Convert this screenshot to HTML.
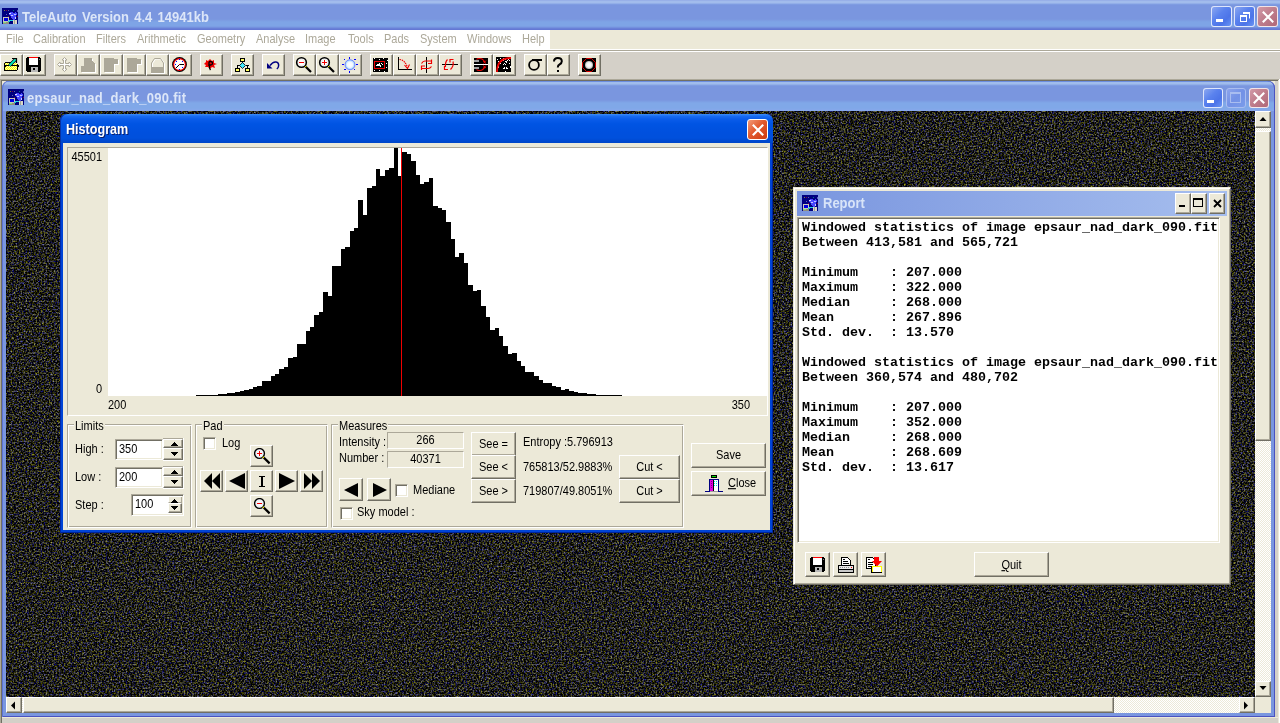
<!DOCTYPE html><html><head><meta charset="utf-8"><style>
*{box-sizing:border-box}
html,body{margin:0;padding:0}
body{width:1280px;height:723px;overflow:hidden;position:relative;background:#D4D0C8;font-family:"Liberation Sans",sans-serif;font-size:11px;color:#000}
.a{position:absolute}
.t{position:absolute;white-space:nowrap;line-height:13px;will-change:transform;transform:scaleY(1.12);transform-origin:0 10px}
.tbi{background:linear-gradient(to bottom,#98B0E8 0,#98B0E8 1px,#A2BCEC 1px,#A2BCEC 3px,#84A2E4 4px,#7A96DF 5px,#7A96DF 19px,#7EA4E6 22px,#7EA4E6 26px,#7898E2 27px,#6E88DA 28px,#6478D4 29px,#6478D4 30px)}
.tbc{background:linear-gradient(to bottom,#6C8EE0 0,#6C8EE0 1px,#A0BCEC 1px,#A0BCEC 3px,#86A4E4 4px,#7A96DF 5px,#7A96DF 19px,#80A8E8 22px,#80A8E8 27px,#88A8EC 30px)}
.rb{position:absolute;background:#ECE9D8;border-top:1px solid #fff;border-left:1px solid #fff;border-right:1px solid #716F64;border-bottom:1px solid #716F64;box-shadow:inset -1px -1px 0 #ACA899}
.sk{position:absolute;border-top:1px solid #ACA899;border-left:1px solid #ACA899;border-right:1px solid #fff;border-bottom:1px solid #fff}
.sk2{position:absolute;background:#fff;border-top:1px solid #ACA899;border-left:1px solid #ACA899;border-right:1px solid #fff;border-bottom:1px solid #fff;box-shadow:inset 1px 1px 0 #716F64, inset -1px -1px 0 #ECE9D8}
.gb{position:absolute;border-top:1px solid #ACA899;border-left:1px solid #ACA899;border-right:1px solid #fff;border-bottom:1px solid #fff;box-shadow:inset 1px 1px 0 #fff, inset -1px -1px 0 #ACA899}
.menu .t{top:3px;color:#ACA899;font-size:11px}
.tb{top:54px;width:23px;height:22px}
.tb svg{position:absolute;left:2px;top:2px}
.mono{font-family:"Liberation Mono",monospace;font-weight:bold;font-size:13.33px;line-height:15px;white-space:pre;position:absolute;will-change:transform}
.xpb{position:absolute;border-radius:3px;border:1px solid #fff}
</style></head><body>
<div class="a tbi" style="left:0;top:0;width:1280px;height:30px"></div>
<svg class="a" style="left:2px;top:8px" width="16" height="16" viewBox="0 0 16 16" shape-rendering="crispEdges"><rect width="16" height="16" fill="#000080"/><rect x="2" y="2" width="1" height="1" fill="#808040"/><rect x="4" y="2" width="1" height="1" fill="#800040"/><rect x="6" y="2" width="1" height="1" fill="#6060A0"/><rect x="11" y="2" width="1" height="1" fill="#008080"/><rect x="15" y="2" width="1" height="2" fill="#6060C0"/><rect x="4" y="6" width="1" height="1" fill="#6060C0"/><rect x="6" y="8" width="1" height="1" fill="#800040"/><rect x="15" y="8" width="1" height="1" fill="#800040"/><path d="M7 5 L9 4 L12 5 L14 4 L15 6 L14 8 L13 11 L12 12 L10 11 L9 9 L8 8 Z" fill="#4848FF"/><rect x="7" y="5" width="2" height="1" fill="#E0E0FF"/><rect x="9" y="7" width="2" height="1" fill="#C8C8FF"/><rect x="12" y="6" width="2" height="1" fill="#C0C0FF"/><rect x="13" y="9" width="1" height="2" fill="#D0D0FF"/><rect x="1" y="9" width="6" height="5" fill="#C8C8B8"/><rect x="2" y="10" width="4" height="3" fill="#0000E0"/><rect x="1" y="14" width="6" height="2" fill="#909080"/><rect x="1" y="14" width="3" height="1" fill="#80E080"/><rect x="7" y="12" width="4" height="1" fill="#20D8E8"/><rect x="6" y="13" width="2" height="1" fill="#20B8C8"/><rect x="11" y="12" width="4" height="4" fill="#D8D8C8"/><rect x="12" y="12" width="1" height="4" fill="#A0A098"/></svg>
<div class="t" style="left:22px;top:11px;font-weight:bold;font-size:13px;word-spacing:1.7px;color:#DCE6F8">TeleAuto Version 4.4 14941kb</div>
<div class="xpb" style="left:1211px;top:6px;width:21px;height:21px;background:linear-gradient(135deg,#8BA7F0 0%,#5A82EE 40%,#4C74E8 70%,#6A95F4 100%);border-color:rgba(255,255,255,0.8)">
<div class="a" style="left:4px;top:12px;width:7px;height:3px;background:#fff"></div>
</div>
<div class="xpb" style="left:1234px;top:6px;width:21px;height:21px;background:linear-gradient(135deg,#8BA7F0 0%,#5A82EE 40%,#4C74E8 70%,#6A95F4 100%);border-color:rgba(255,255,255,0.8)">
<svg class="a" style="left:4px;top:4px" width="12" height="12"><path d="M4 1.5 H10.5 V7.5 M4 2.5 H10.5" stroke="#fff" stroke-width="1" fill="none"/><rect x="1.5" y="4.5" width="6" height="6" stroke="#fff" fill="none"/><rect x="1" y="4" width="7" height="2" fill="#fff"/><rect x="4" y="1" width="7" height="2" fill="#fff"/></svg>
</div>
<div class="xpb" style="left:1257px;top:6px;width:21px;height:21px;background:linear-gradient(135deg,#D29AA8 0%,#C07F8E 45%,#B06878 100%);border-color:rgba(255,255,255,0.8)">
<svg class="a" style="left:3px;top:3px" width="14" height="14"><path d="M1.8 1.8 L12.2 12.2 M12.2 1.8 L1.8 12.2" stroke="#fff" stroke-width="2.1"/></svg>
</div>
<div class="a" style="left:0;top:30px;width:1280px;height:19px;background:#ECE9D8"></div>
<div class="a menu" style="left:0;top:30px;width:550px;height:19px;background:#fff">
<div class="t" style="left:6px">File</div>
<div class="t" style="left:33px">Calibration</div>
<div class="t" style="left:96px">Filters</div>
<div class="t" style="left:137px">Arithmetic</div>
<div class="t" style="left:197px">Geometry</div>
<div class="t" style="left:256px">Analyse</div>
<div class="t" style="left:305px">Image</div>
<div class="t" style="left:348px">Tools</div>
<div class="t" style="left:384px">Pads</div>
<div class="t" style="left:420px">System</div>
<div class="t" style="left:467px">Windows</div>
<div class="t" style="left:522px">Help</div>
</div>
<div class="a" style="left:0;top:49px;width:1280px;height:1px;background:#fff"></div>
<div class="a" style="left:0;top:50px;width:1280px;height:1px;background:#ACA899"></div>
<div class="a" style="left:0;top:51px;width:1280px;height:1px;background:#fff"></div>
<div class="a" style="left:0;top:52px;width:1280px;height:28px;background:#D4D0C8"></div>
<div class="rb tb" style="left:0px"></div>
<div class="rb tb" style="left:23px"></div>
<div class="rb tb" style="left:54px"></div>
<div class="rb tb" style="left:77px"></div>
<div class="rb tb" style="left:100px"></div>
<div class="rb tb" style="left:123px"></div>
<div class="rb tb" style="left:146px"></div>
<div class="rb tb" style="left:169px"></div>
<div class="rb tb" style="left:200px"></div>
<div class="rb tb" style="left:231px"></div>
<div class="rb tb" style="left:262px"></div>
<div class="rb tb" style="left:293px"></div>
<div class="rb tb" style="left:316px"></div>
<div class="rb tb" style="left:339px"></div>
<div class="rb tb" style="left:370px"></div>
<div class="rb tb" style="left:393px"></div>
<div class="rb tb" style="left:416px"></div>
<div class="rb tb" style="left:439px"></div>
<div class="rb tb" style="left:470px"></div>
<div class="rb tb" style="left:493px"></div>
<div class="rb tb" style="left:524px"></div>
<div class="rb tb" style="left:547px"></div>
<div class="rb tb" style="left:578px"></div>
<svg class="a" style="left:0;top:0" width="620" height="80"><g shape-rendering="crispEdges"><rect x="5" y="62" width="6" height="1" fill="#000"/><rect x="4" y="63" width="1" height="8" fill="#000"/><rect x="5" y="70" width="12" height="1" fill="#000"/><rect x="11" y="63" width="6" height="1" fill="#000"/><rect x="5" y="63" width="1" height="1" fill="#FFFF00"/><rect x="6" y="63" width="1" height="1" fill="#FFFFB0"/><rect x="7" y="63" width="1" height="1" fill="#FFFF00"/><rect x="8" y="63" width="1" height="1" fill="#FFFFB0"/><rect x="9" y="63" width="1" height="1" fill="#FFFF00"/><rect x="10" y="63" width="1" height="1" fill="#FFFFB0"/><rect x="11" y="63" width="1" height="1" fill="#FFFF00"/><rect x="12" y="63" width="1" height="1" fill="#FFFFB0"/><rect x="13" y="63" width="1" height="1" fill="#FFFF00"/><rect x="14" y="63" width="1" height="1" fill="#FFFFB0"/><rect x="15" y="63" width="1" height="1" fill="#FFFF00"/><rect x="16" y="63" width="1" height="1" fill="#FFFFB0"/><rect x="5" y="64" width="1" height="1" fill="#FFFFB0"/><rect x="6" y="64" width="1" height="1" fill="#FFFF00"/><rect x="7" y="64" width="1" height="1" fill="#FFFFB0"/><rect x="8" y="64" width="1" height="1" fill="#FFFF00"/><rect x="9" y="64" width="1" height="1" fill="#FFFFB0"/><rect x="10" y="64" width="1" height="1" fill="#FFFF00"/><rect x="11" y="64" width="1" height="1" fill="#FFFFB0"/><rect x="12" y="64" width="1" height="1" fill="#FFFF00"/><rect x="13" y="64" width="1" height="1" fill="#FFFFB0"/><rect x="14" y="64" width="1" height="1" fill="#FFFF00"/><rect x="15" y="64" width="1" height="1" fill="#FFFFB0"/><rect x="16" y="64" width="1" height="1" fill="#FFFF00"/><rect x="5" y="65" width="1" height="1" fill="#FFFF00"/><rect x="6" y="65" width="1" height="1" fill="#FFFFB0"/><rect x="7" y="65" width="1" height="1" fill="#FFFF00"/><rect x="8" y="65" width="1" height="1" fill="#FFFFB0"/><rect x="9" y="65" width="1" height="1" fill="#FFFF00"/><rect x="10" y="65" width="1" height="1" fill="#FFFFB0"/><rect x="11" y="65" width="1" height="1" fill="#FFFF00"/><rect x="12" y="65" width="1" height="1" fill="#FFFFB0"/><rect x="13" y="65" width="1" height="1" fill="#FFFF00"/><rect x="14" y="65" width="1" height="1" fill="#FFFFB0"/><rect x="15" y="65" width="1" height="1" fill="#FFFF00"/><rect x="16" y="65" width="1" height="1" fill="#FFFFB0"/><rect x="5" y="66" width="1" height="1" fill="#FFFFB0"/><rect x="6" y="66" width="1" height="1" fill="#FFFF00"/><rect x="7" y="66" width="1" height="1" fill="#FFFFB0"/><rect x="8" y="66" width="1" height="1" fill="#FFFF00"/><rect x="9" y="66" width="1" height="1" fill="#FFFFB0"/><rect x="10" y="66" width="1" height="1" fill="#FFFF00"/><rect x="11" y="66" width="1" height="1" fill="#FFFFB0"/><rect x="12" y="66" width="1" height="1" fill="#FFFF00"/><rect x="13" y="66" width="1" height="1" fill="#FFFFB0"/><rect x="14" y="66" width="1" height="1" fill="#FFFF00"/><rect x="15" y="66" width="1" height="1" fill="#FFFFB0"/><rect x="16" y="66" width="1" height="1" fill="#FFFF00"/><rect x="5" y="67" width="1" height="1" fill="#FFFF00"/><rect x="6" y="67" width="1" height="1" fill="#FFFFB0"/><rect x="7" y="67" width="1" height="1" fill="#FFFF00"/><rect x="8" y="67" width="1" height="1" fill="#FFFFB0"/><rect x="9" y="67" width="1" height="1" fill="#FFFF00"/><rect x="10" y="67" width="1" height="1" fill="#FFFFB0"/><rect x="11" y="67" width="1" height="1" fill="#FFFF00"/><rect x="12" y="67" width="1" height="1" fill="#FFFFB0"/><rect x="13" y="67" width="1" height="1" fill="#FFFF00"/><rect x="14" y="67" width="1" height="1" fill="#FFFFB0"/><rect x="15" y="67" width="1" height="1" fill="#FFFF00"/><rect x="16" y="67" width="1" height="1" fill="#FFFFB0"/><rect x="5" y="68" width="1" height="1" fill="#FFFFB0"/><rect x="6" y="68" width="1" height="1" fill="#FFFF00"/><rect x="7" y="68" width="1" height="1" fill="#FFFFB0"/><rect x="8" y="68" width="1" height="1" fill="#FFFF00"/><rect x="9" y="68" width="1" height="1" fill="#FFFFB0"/><rect x="10" y="68" width="1" height="1" fill="#FFFF00"/><rect x="11" y="68" width="1" height="1" fill="#FFFFB0"/><rect x="12" y="68" width="1" height="1" fill="#FFFF00"/><rect x="13" y="68" width="1" height="1" fill="#FFFFB0"/><rect x="14" y="68" width="1" height="1" fill="#FFFF00"/><rect x="15" y="68" width="1" height="1" fill="#FFFFB0"/><rect x="16" y="68" width="1" height="1" fill="#FFFF00"/><rect x="5" y="69" width="1" height="1" fill="#FFFF00"/><rect x="6" y="69" width="1" height="1" fill="#FFFFB0"/><rect x="7" y="69" width="1" height="1" fill="#FFFF00"/><rect x="8" y="69" width="1" height="1" fill="#FFFFB0"/><rect x="9" y="69" width="1" height="1" fill="#FFFF00"/><rect x="10" y="69" width="1" height="1" fill="#FFFFB0"/><rect x="11" y="69" width="1" height="1" fill="#FFFF00"/><rect x="12" y="69" width="1" height="1" fill="#FFFFB0"/><rect x="13" y="69" width="1" height="1" fill="#FFFF00"/><rect x="14" y="69" width="1" height="1" fill="#FFFFB0"/><rect x="15" y="69" width="1" height="1" fill="#FFFF00"/><rect x="16" y="69" width="1" height="1" fill="#FFFFB0"/><rect x="17" y="64" width="1" height="6" fill="#000"/><rect x="18" y="65" width="1" height="2" fill="#000"/><rect x="5" y="65" width="12" height="1" fill="#000"/><rect x="5" y="66" width="1" height="1" fill="#000"/></g><path d="M9.5 65.5 L15.5 59.5" stroke="#000" stroke-width="3.2"/><path d="M9.5 65.5 L15.5 59.5" stroke="#00E8C0" stroke-width="2"/><path d="M12 58.5 H16.5 V63" stroke="#000" fill="none" stroke-width="1.2"/><g shape-rendering="crispEdges"><rect x="27" y="57" width="13" height="15" fill="#000"/><rect x="26" y="58" width="15" height="13" fill="#000"/><rect x="29" y="57" width="9" height="1" fill="#FF0000"/><rect x="29" y="58" width="9" height="7" fill="#fff"/><rect x="31" y="67" width="7" height="5" fill="#B8B8B8"/><rect x="33" y="68" width="2" height="2" fill="#000"/><rect x="39" y="59" width="1" height="1" fill="#808080"/></g><path d="M64.5 57.5 L67 60 H65.5 V63.5 H69 V62 L71.5 64.5 L69 67 V65.5 H65.5 V69 H67 L64.5 71.5 L62 69 H63.5 V65.5 H60 V67 L57.5 64.5 L60 62 V63.5 H63.5 V60 H62 Z" fill="#fff" stroke="#ACA899" stroke-width="1"/><path d="M64.5 59 V70 M59 64.5 H70" stroke="#fff" stroke-width="1"/><g shape-rendering="crispEdges"><path d="M84 58 H92 V60 L95 64 V72 H81 V66 H84 Z" fill="#fff" transform="translate(1,1)"/><path d="M84 58 H92 V60 L95 64 V72 H81 V66 H84 Z" fill="#ACA899"/><path d="M104 58 H114 V59 H118 V64 H114 V72 H104 Z" fill="#fff" transform="translate(1,1)"/><path d="M104 58 H114 V59 H118 V64 H114 V72 H104 Z" fill="#ACA899"/><path d="M127 58 H137 V59 H141 V64 H137 V72 H127 Z" fill="#fff" transform="translate(1,1)"/><path d="M127 58 H137 V59 H141 V64 H137 V72 H127 Z" fill="#ACA899"/></g><path d="M151.5 72 V63 L154.5 58.5 H160.5 L163.5 63 V72" fill="none" stroke="#fff" transform="translate(1,0.5)"/><path d="M151.5 67 V63 L154.5 58.5 H160.5 L163.5 63 V67" fill="none" stroke="#ACA899"/><g shape-rendering="crispEdges"><rect x="151" y="67" width="13" height="6" fill="#ACA899"/><rect x="164" y="67" width="1" height="6" fill="#fff"/><rect x="151" y="73" width="14" height="1" fill="#fff"/></g><circle cx="179.5" cy="64.5" r="7.4" fill="#000"/><circle cx="179.5" cy="64.5" r="6.5" fill="#F00000"/><circle cx="179.5" cy="64.5" r="5.3" fill="#fff"/><g shape-rendering="crispEdges" fill="#0000FF"><rect x="179" y="59" width="1" height="1"/><rect x="182" y="61" width="1" height="1"/><rect x="176" y="61" width="1" height="1"/><rect x="175" y="64" width="1" height="1"/><rect x="182" y="67" width="1" height="1"/><rect x="176" y="67" width="1" height="1"/><rect x="179" y="69" width="1" height="1"/></g><g shape-rendering="crispEdges"><rect x="180" y="64" width="4" height="1" fill="#000"/><rect x="179" y="64" width="1" height="1" fill="#F00000"/><rect x="178" y="65" width="1" height="1" fill="#000"/><rect x="177" y="66" width="1" height="1" fill="#000"/><rect x="176" y="67" width="1" height="1" fill="#000"/></g><path d="M210 59 L212 61 L214 60 L214 63 L217 64 L214 65 L215 68 L212 67 L210 69 L208 67 L205 67 L206 65 L204 64 L206 62 L206 60 L208 61 Z" fill="#F00000"/><path d="M209 66 V62.5 Q209 61.5 210.5 61.5 Q212.5 61.5 212.5 63.5 Q212.5 65 210.5 65 H209" fill="none" stroke="#000" stroke-width="1.3"/><path d="M209.5 66 Q209 68 210.5 70" fill="none" stroke="#000" stroke-width="1.3"/><g shape-rendering="crispEdges"><rect x="240" y="58" width="5" height="4" fill="#000"/><rect x="241" y="59" width="3" height="2" fill="#FFFF60"/><rect x="235" y="68" width="5" height="4" fill="#000"/><rect x="236" y="69" width="3" height="2" fill="#FFFF60"/><rect x="245" y="68" width="5" height="4" fill="#000"/><rect x="246" y="69" width="3" height="2" fill="#FFFF60"/><rect x="237" y="65" width="1" height="3" fill="#000"/><rect x="237" y="65" width="3" height="1" fill="#000"/><rect x="246" y="65" width="3" height="1" fill="#000"/><rect x="247" y="65" width="1" height="3" fill="#000"/><rect x="242" y="62" width="1" height="1" fill="#000"/></g><path d="M242.5 62.5 L245.5 65.5 L242.5 68.5 L239.5 65.5 Z" fill="#40E8FF" stroke="#000" stroke-width="0.8"/><path d="M270 65.5 Q273 61.5 276 62 Q279 62.5 278.6 66 Q278.3 68 276.8 69" fill="none" stroke="#000080" stroke-width="1.5"/><path d="M267 63 V68.5 H272.5 Z" fill="#000080"/><circle cx="301.5" cy="62.5" r="4.8" fill="#fff" stroke="#000" stroke-width="1.6"/><circle cx="301.5" cy="62.5" r="3.2" fill="none" stroke="#D8D8D8" stroke-width="0.5"/><g shape-rendering="crispEdges"><rect x="299.0" y="62" width="5" height="1.4" fill="#F00000"/></g><path d="M305.5 66.5 L311.0 72" stroke="#000" stroke-width="2.2"/><rect x="305.1" y="66" width="1.2" height="1.2" fill="#E8E800"/><circle cx="324.5" cy="62.5" r="4.8" fill="#fff" stroke="#000" stroke-width="1.6"/><circle cx="324.5" cy="62.5" r="3.2" fill="none" stroke="#D8D8D8" stroke-width="0.5"/><g shape-rendering="crispEdges"><rect x="322.0" y="62" width="5" height="1.4" fill="#F00000"/><rect x="323.8" y="59.5" width="1.4" height="5" fill="#F00000"/></g><path d="M328.5 66.5 L334.0 72" stroke="#000" stroke-width="2.2"/><rect x="328.1" y="66" width="1.2" height="1.2" fill="#E8E800"/><defs><radialGradient id="sg"><stop offset="0" stop-color="#fff"/><stop offset="0.55" stop-color="#F0F8FF"/><stop offset="0.85" stop-color="#A8D8FF"/><stop offset="1" stop-color="#7090FF"/></radialGradient></defs><circle cx="350" cy="64.7" r="5" fill="url(#sg)" stroke="#6A7CFF" stroke-width="0.8"/><g shape-rendering="crispEdges" fill="#0000FF"><rect x="349" y="57" width="1" height="2" fill="#0000FF"/><rect x="349" y="71" width="1" height="2" fill="#0000FF"/><rect x="342" y="64" width="2" height="1" fill="#0000FF"/><rect x="356" y="64" width="2" height="1" fill="#0000FF"/><rect x="344" y="59" width="1" height="1" fill="#0000FF"/><rect x="354" y="59" width="2" height="1" fill="#0000FF"/><rect x="344" y="69" width="2" height="1" fill="#0000FF"/><rect x="354" y="69" width="1" height="1" fill="#0000FF"/></g><g shape-rendering="crispEdges"><rect x="373" y="58" width="15" height="14" fill="#000"/><rect x="374" y="58" width="1" height="1" fill="#fff"/><rect x="379" y="59" width="1" height="1" fill="#fff"/><rect x="383" y="58" width="1" height="1" fill="#fff"/><rect x="387" y="60" width="1" height="1" fill="#fff"/><rect x="386" y="63" width="1" height="1" fill="#fff"/><rect x="386" y="67" width="1" height="1" fill="#fff"/><rect x="374" y="70" width="1" height="1" fill="#fff"/><rect x="379" y="70" width="1" height="1" fill="#fff"/><rect x="384" y="71" width="1" height="1" fill="#fff"/><rect x="374" y="62" width="1" height="1" fill="#fff"/><rect x="376" y="65" width="1" height="1" fill="#fff"/><rect x="374" y="61" width="11" height="1" fill="#F00000"/><rect x="374" y="68" width="11" height="1" fill="#F00000"/><rect x="374" y="61" width="1" height="8" fill="#F00000"/><rect x="384" y="61" width="1" height="8" fill="#F00000"/><rect x="377" y="64" width="2" height="2" fill="#fff"/><rect x="379" y="63" width="1" height="3" fill="#fff"/><rect x="380" y="65" width="1" height="2" fill="#fff"/><rect x="381" y="63" width="1" height="1" fill="#fff"/><rect x="382" y="64" width="1" height="1" fill="#fff"/></g><g shape-rendering="crispEdges"><rect x="398" y="57" width="1" height="13" fill="#000"/><rect x="398" y="69" width="14" height="1" fill="#000"/></g><path d="M399.5 59.5 Q405 60 407.5 67.5" fill="none" stroke="#F00000" stroke-width="1.1" stroke-dasharray="1.5 0.8"/><path d="M404.5 65 L407.5 68.5 L409.5 64.5" fill="none" stroke="#F00000" stroke-width="1.1"/><g shape-rendering="crispEdges"><rect x="426" y="57" width="1" height="16" fill="#000"/></g><path d="M421.5 63.5 Q423 61 425 61 H431" fill="none" stroke="#F00000" stroke-width="1.2"/><path d="M431.5 59.5 V63.5 H428" fill="none" stroke="#F00000" stroke-width="1.2"/><path d="M431.5 66.5 Q430 68.5 428 68.5 H422" fill="none" stroke="#F00000" stroke-width="1.2"/><path d="M421.5 70 V66 H425" fill="none" stroke="#F00000" stroke-width="1.2"/><g shape-rendering="crispEdges"><rect x="442" y="64" width="16" height="1" fill="#000"/></g><path d="M447.5 59.5 Q445 62 445.5 67 " fill="none" stroke="#F00000" stroke-width="1.2"/><path d="M444.5 66 V69.5 H448" fill="none" stroke="#F00000" stroke-width="1.2"/><path d="M453 61.5 Q454 66 450.5 69.5" fill="none" stroke="#F00000" stroke-width="1.2"/><path d="M450 62.5 V59.5 H453.5" fill="none" stroke="#F00000" stroke-width="1.2"/><g shape-rendering="crispEdges"><rect x="474" y="58" width="14" height="14" fill="#000"/><rect x="474" y="60" width="5" height="2" fill="#A0A0A0"/><rect x="474" y="67" width="5" height="2" fill="#A0A0A0"/><rect x="474" y="64" width="14" height="1" fill="#fff"/></g><path d="M476.5 59.5 Q477 58.5 480 58.5 Q483 58.5 485 62.5 M476.5 69.5 Q477 70.5 480 70.5 Q483 70.5 485 66.5" fill="none" stroke="#F00000" stroke-width="1.1"/><path d="M483 61 L486 63.5 M486 60.5 L483.5 63.5 M483 65.5 L486 68 M486 65.5 L483.5 68" stroke="#F00000" stroke-width="0.9"/><g shape-rendering="crispEdges"><rect x="496" y="57" width="15" height="15" fill="#000"/><rect x="502" y="60" width="1" height="1" fill="#fff"/><rect x="503" y="68" width="1" height="1" fill="#fff"/><rect x="497" y="59" width="1" height="1" fill="#fff"/><rect x="510" y="66" width="1" height="1" fill="#fff"/><rect x="498" y="63" width="1" height="1" fill="#fff"/><rect x="506" y="58" width="1" height="1" fill="#fff"/><rect x="505" y="61" width="1" height="1" fill="#fff"/><rect x="497" y="59" width="1" height="1" fill="#fff"/><rect x="503" y="64" width="1" height="1" fill="#fff"/><rect x="498" y="61" width="1" height="1" fill="#fff"/><rect x="498" y="66" width="1" height="1" fill="#fff"/><rect x="503" y="58" width="1" height="1" fill="#fff"/><rect x="510" y="67" width="1" height="1" fill="#fff"/><rect x="498" y="61" width="1" height="1" fill="#fff"/><rect x="507" y="68" width="1" height="1" fill="#fff"/><rect x="506" y="58" width="1" height="1" fill="#fff"/><rect x="506" y="67" width="1" height="1" fill="#fff"/><rect x="503" y="58" width="1" height="1" fill="#fff"/><rect x="500" y="58" width="1" height="1" fill="#fff"/><rect x="505" y="71" width="1" height="1" fill="#fff"/><rect x="499" y="62" width="1" height="1" fill="#fff"/><rect x="503" y="60" width="1" height="1" fill="#fff"/><rect x="505" y="59" width="1" height="1" fill="#fff"/><rect x="506" y="62" width="1" height="1" fill="#fff"/><rect x="505" y="71" width="1" height="1" fill="#fff"/><rect x="507" y="60" width="1" height="1" fill="#fff"/><rect x="498" y="67" width="1" height="1" fill="#fff"/><rect x="506" y="68" width="1" height="1" fill="#fff"/><rect x="500" y="63" width="1" height="1" fill="#fff"/><rect x="498" y="66" width="1" height="1" fill="#fff"/><rect x="508" y="59" width="1" height="1" fill="#fff"/><rect x="506" y="58" width="1" height="1" fill="#fff"/><rect x="506" y="61" width="1" height="1" fill="#fff"/><rect x="504" y="68" width="1" height="1" fill="#fff"/><rect x="505" y="64" width="1" height="1" fill="#fff"/><rect x="509" y="63" width="1" height="1" fill="#fff"/><rect x="504" y="67" width="1" height="1" fill="#fff"/><rect x="504" y="63" width="1" height="1" fill="#fff"/><rect x="501" y="61" width="1" height="1" fill="#fff"/><rect x="509" y="60" width="1" height="1" fill="#fff"/></g><path d="M497 72 Q497 58 511 58" fill="none" stroke="#F00000" stroke-width="1.8"/><circle cx="534" cy="65" r="4.9" fill="none" stroke="#000" stroke-width="1.8"/><g shape-rendering="crispEdges"><rect x="532" y="59" width="10" height="2" fill="#000"/></g><path d="M554 61.5 Q554 58 557.8 58 Q561.8 58 561.8 61.3 Q561.8 63.5 559.5 64.5 Q557.8 65.3 557.8 67.5" fill="none" stroke="#000" stroke-width="2"/><g shape-rendering="crispEdges"><rect x="557" y="70" width="2" height="2" fill="#000"/></g><g shape-rendering="crispEdges"><rect x="582" y="58" width="14" height="14" fill="#000"/></g><path d="M586.5 58.5 H591.5 L595.5 62.5 V67.5 L591.5 71.5 H586.5 L582.5 67.5 V62.5 Z" fill="none" stroke="#F00000" stroke-width="0.9"/><defs><radialGradient id="og"><stop offset="0" stop-color="#fff"/><stop offset="0.6" stop-color="#F0F0F0"/><stop offset="1" stop-color="#B0B0B0"/></radialGradient></defs><circle cx="589" cy="65" r="4" fill="url(#og)"/></svg>
<div class="a" style="left:0;top:79px;width:1280px;height:1px;background:#ACA899"></div>
<div class="a" style="left:1px;top:80px;width:1277px;height:1px;background:#716F64"></div>
<div class="a" style="left:0;top:79px;width:1px;height:644px;background:#ACA899"></div>
<div class="a" style="left:1px;top:80px;width:1px;height:643px;background:#716F64"></div>
<div class="a" style="left:1278px;top:80px;width:1px;height:643px;background:#ECE9D8"></div>
<div class="a" style="left:1279px;top:79px;width:1px;height:644px;background:#fff"></div>
<div class="a" style="left:2px;top:81px;width:1276px;height:642px;background:#D4D0C8"></div>
<div class="a" style="left:2px;top:81px;width:8px;height:8px;background:#ECE9D8"></div>
<div class="a" style="left:1267px;top:81px;width:8px;height:8px;background:#ECE9D8"></div>
<div class="a" style="left:2px;top:717px;width:1276px;height:1px;background:#ECE9D8"></div>
<div class="a" style="left:2px;top:81px;width:1273px;height:636px;background:#7A96DF;border-radius:7px 7px 0 0;box-shadow:inset 1px 0 0 #5C72D6, inset -1px -1px 0 #4A52C0"></div>
<div class="a tbc" style="left:2px;top:81px;width:1273px;height:30px;border-radius:7px 7px 0 0;box-shadow:inset 1px 0 0 #5C72D6, inset -1px 0 0 #4A52C0"></div>
<svg class="a" style="left:8px;top:89px" width="16" height="16" viewBox="0 0 16 16" shape-rendering="crispEdges"><rect width="16" height="16" fill="#000080"/><rect x="2" y="2" width="1" height="1" fill="#808040"/><rect x="4" y="2" width="1" height="1" fill="#800040"/><rect x="6" y="2" width="1" height="1" fill="#6060A0"/><rect x="11" y="2" width="1" height="1" fill="#008080"/><rect x="15" y="2" width="1" height="2" fill="#6060C0"/><rect x="4" y="6" width="1" height="1" fill="#6060C0"/><rect x="6" y="8" width="1" height="1" fill="#800040"/><rect x="15" y="8" width="1" height="1" fill="#800040"/><path d="M7 5 L9 4 L12 5 L14 4 L15 6 L14 8 L13 11 L12 12 L10 11 L9 9 L8 8 Z" fill="#4848FF"/><rect x="7" y="5" width="2" height="1" fill="#E0E0FF"/><rect x="9" y="7" width="2" height="1" fill="#C8C8FF"/><rect x="12" y="6" width="2" height="1" fill="#C0C0FF"/><rect x="13" y="9" width="1" height="2" fill="#D0D0FF"/><rect x="1" y="9" width="6" height="5" fill="#C8C8B8"/><rect x="2" y="10" width="4" height="3" fill="#0000E0"/><rect x="1" y="14" width="6" height="2" fill="#909080"/><rect x="1" y="14" width="3" height="1" fill="#80E080"/><rect x="7" y="12" width="4" height="1" fill="#20D8E8"/><rect x="6" y="13" width="2" height="1" fill="#20B8C8"/><rect x="11" y="12" width="4" height="4" fill="#D8D8C8"/><rect x="12" y="12" width="1" height="4" fill="#A0A098"/></svg>
<div class="t" style="left:27px;top:92px;font-weight:bold;font-size:13px;letter-spacing:0.3px;color:#DCE6F8">epsaur_nad_dark_090.fit</div>
<div class="xpb" style="left:1203px;top:88px;width:20px;height:20px;background:linear-gradient(135deg,#8BA7F0 0%,#5A82EE 40%,#4C74E8 70%,#6A95F4 100%);border-color:rgba(255,255,255,0.8)">
<div class="a" style="left:3px;top:11px;width:7px;height:3px;background:#fff"></div>
</div>
<div class="xpb" style="left:1226px;top:88px;width:20px;height:20px;background:linear-gradient(135deg,#8CA4EC 0%,#7391E6 50%,#7A9CEA 100%);border-color:#A9BDF0">
<svg class="a" style="left:3px;top:3px" width="12" height="12" shape-rendering="crispEdges"><rect x="0.5" y="0.5" width="10" height="10" stroke="#A9BDF0" fill="none"/><rect x="0" y="0" width="11" height="2" fill="#A9BDF0"/></svg>
</div>
<div class="xpb" style="left:1249px;top:88px;width:20px;height:20px;background:linear-gradient(135deg,#D29AA8 0%,#C07F8E 45%,#B06878 100%);border-color:rgba(255,255,255,0.8)">
<svg class="a" style="left:2px;top:2px" width="14" height="14"><path d="M1.8 1.8 L12.2 12.2 M12.2 1.8 L1.8 12.2" stroke="#fff" stroke-width="2.1"/></svg>
</div>
<svg class="a" style="left:6px;top:111px" width="1249" height="586"><filter id="nz" x="0" y="0" width="100%" height="100%" color-interpolation-filters="sRGB"><feTurbulence type="fractalNoise" baseFrequency="0.6" numOctaves="3" seed="5"/><feColorMatrix values="1.1 0.45 0 0 -0.65  1.1 0.45 0 0 -0.65  1.1 -0.9 0 0 0  0 0 0 0 1"/></filter><rect width="1249" height="586" fill="#000"/><rect width="1249" height="586" filter="url(#nz)"/></svg>
<div class="a" style="left:1255px;top:111px;width:16px;height:586px;background-color:#F4F3EE;background-image:linear-gradient(45deg,#ECE9D8 25%,transparent 25%,transparent 75%,#ECE9D8 75%),linear-gradient(45deg,#ECE9D8 25%,#fff 25%,#fff 75%,#ECE9D8 75%);background-size:2px 2px;background-position:0 0,1px 1px"></div>
<div class="rb" style="left:1255px;top:111px;width:16px;height:17px">
<svg class="a" style="left:3px;top:4px" width="8" height="6"><path d="M0.5 5 L4 1 L7.5 5 Z" fill="#000"/></svg>
</div>
<div class="rb" style="left:1255px;top:131px;width:16px;height:310px">
</div>
<div class="rb" style="left:1255px;top:681px;width:16px;height:16px">
<svg class="a" style="left:3px;top:3px" width="8" height="6"><path d="M0.5 1 L4 5 L7.5 1 Z" fill="#000"/></svg>
</div>
<div class="a" style="left:6px;top:697px;width:1249px;height:16px;background-color:#F4F3EE;background-image:linear-gradient(45deg,#ECE9D8 25%,transparent 25%,transparent 75%,#ECE9D8 75%),linear-gradient(45deg,#ECE9D8 25%,#fff 25%,#fff 75%,#ECE9D8 75%);background-size:2px 2px;background-position:0 0,1px 1px"></div>
<div class="rb" style="left:6px;top:697px;width:16px;height:16px">
<svg class="a" style="left:3px;top:3px" width="6" height="9"><path d="M5 0.5 L1 4.5 L5 8.5 Z" fill="#000"/></svg>
</div>
<div class="rb" style="left:23px;top:697px;width:1091px;height:16px">
</div>
<div class="rb" style="left:1239px;top:697px;width:16px;height:16px">
<svg class="a" style="left:3px;top:3px" width="6" height="9"><path d="M1 0.5 L5 4.5 L1 8.5 Z" fill="#000"/></svg>
</div>
<div class="a" style="left:1255px;top:697px;width:16px;height:16px;background:#ECE9D8"></div>
<div class="a" style="left:60px;top:114px;width:713px;height:419px;border-radius:7px 7px 0 0;background:#0044D6;box-shadow:inset 1px 0 0 #0029A8, inset -1px -1px 0 #00249A"></div>
<div class="a" style="left:60px;top:114px;width:713px;height:29px;border-radius:7px 7px 0 0;background:linear-gradient(to bottom,#3C8FF8 0px,#1A6DF2 2px,#0A5CEA 5px,#0054E3 10px,#0050DE 18px,#0050DC 24px,#0049D0 27px,#0046C8 29px);box-shadow:inset 1px 0 0 #0831A0"></div>
<div class="t" style="left:67px;top:125px;font-weight:bold;font-size:12.6px;color:#0A1E6A">Histogram</div>
<div class="t" style="left:66px;top:124px;font-weight:bold;font-size:12.6px;color:#fff">Histogram</div>
<div class="xpb" style="left:747px;top:119px;width:21px;height:21px;background:linear-gradient(135deg,#F39B79 0%,#E25A2E 45%,#CC3A10 100%);border-color:#fff">
<svg class="a" style="left:3px;top:3px" width="14" height="14"><path d="M1.8 1.8 L12.2 12.2 M12.2 1.8 L1.8 12.2" stroke="#fff" stroke-width="2.1"/></svg>
</div>
<div class="a" style="left:63px;top:143px;width:707px;height:387px;background:#ECE9D8"></div>
<div class="sk" style="left:67px;top:147px;width:701px;height:269px"></div>
<svg class="a" style="left:108px;top:148px" width="659" height="248"><rect width="659" height="248" fill="#fff"/><path d="M88 248 V247 H92 V247 H97 V247 H101 V247 H105 V247 H110 V246 H114 V246 H119 V245 H123 V245 H127 V244 H132 V243 H136 V242 H141 V241 H145 V239 H149 V238 H154 V233 H158 V233 H163 V228 H167 V226 H171 V221 H176 V219 H180 V210 H185 V209 H189 V196 H193 V196 H198 V183 H202 V179 H206 V167 H211 V164 H215 V144 H220 V148 H224 V118 H228 V118 H233 V101 H237 V99 H242 V83 H246 V80 H250 V52 H255 V67 H259 V40 H264 V38 H268 V21 H272 V28 H277 V22 H281 V20 H286 V0 H290 V28 H294 V4 H299 V6 H303 V13 H308 V27 H312 V36 H316 V34 H321 V30 H325 V58 H330 V60 H334 V62 H338 V74 H343 V91 H347 V109 H351 V105 H356 V115 H360 V137 H365 V143 H369 V142 H373 V158 H378 V169 H382 V182 H387 V180 H391 V188 H395 V198 H400 V206 H404 V205 H409 V213 H413 V218 H417 V224 H422 V224 H426 V228 H431 V232 H435 V235 H439 V235 H444 V238 H448 V239 H453 V242 H457 V241 H461 V243 H466 V244 H470 V245 H474 V245 H479 V246 H483 V246 H488 V247 H492 V247 H496 V247 H501 V247 H505 V247 H510 V247 H514 V248 Z" fill="#000"/><rect x="293" y="0" width="1" height="248" fill="#F00000"/></svg>
<div class="t" style="left:60px;top:151px;width:42px;text-align:right">45501</div>
<div class="t" style="left:60px;top:383px;width:42px;text-align:right">0</div>
<div class="t" style="left:108px;top:399px">200</div>
<div class="t" style="left:700px;top:399px;width:50px;text-align:right">350</div>
<div class="gb" style="left:67px;top:424px;width:125px;height:104px"></div>
<div class="t" style="left:74px;top:420px;background:#ECE9D8;padding:0 1px">Limits</div>
<div class="gb" style="left:195px;top:424px;width:133px;height:104px"></div>
<div class="t" style="left:202px;top:420px;background:#ECE9D8;padding:0 1px">Pad</div>
<div class="gb" style="left:331px;top:424px;width:353px;height:104px"></div>
<div class="t" style="left:338px;top:420px;background:#ECE9D8;padding:0 1px">Measures</div>
<div class="t" style="left:75px;top:443px">High :</div>
<div class="t" style="left:75px;top:471px">Low :</div>
<div class="t" style="left:75px;top:499px">Step :</div>
<div class="a" style="left:115px;top:439px;width:48px;height:21px;background:#fff;border-top:1px solid #ACA899;border-left:1px solid #ACA899;border-right:1px solid #fff;border-bottom:1px solid #fff;box-shadow:inset 1px 1px 0 #716F64, inset -1px -1px 0 #ECE9D8"></div>
<div class="t" style="left:119px;top:443px">350</div>
<div class="a" style="left:163px;top:438px;width:21px;height:1px;background:#ACA899"></div>
<div class="a" style="left:183px;top:438px;width:1px;height:22px;background:#fff"></div>
<div class="a" style="left:163px;top:460px;width:21px;height:1px;background:#fff"></div>
<div class="rb" style="left:163px;top:439px;width:20px;height:9px"></div>
<div class="rb" style="left:163px;top:448px;width:20px;height:12px"></div>
<div class="a" style="left:174px;top:442px;width:1px;height:1px;background:#000"></div><div class="a" style="left:173px;top:443px;width:3px;height:1px;background:#000"></div><div class="a" style="left:172px;top:444px;width:5px;height:1px;background:#000"></div><div class="a" style="left:171px;top:445px;width:7px;height:1px;background:#000"></div>
<div class="a" style="left:174px;top:455px;width:1px;height:1px;background:#000"></div><div class="a" style="left:173px;top:454px;width:3px;height:1px;background:#000"></div><div class="a" style="left:172px;top:453px;width:5px;height:1px;background:#000"></div><div class="a" style="left:171px;top:452px;width:7px;height:1px;background:#000"></div>
<div class="a" style="left:115px;top:467px;width:48px;height:21px;background:#fff;border-top:1px solid #ACA899;border-left:1px solid #ACA899;border-right:1px solid #fff;border-bottom:1px solid #fff;box-shadow:inset 1px 1px 0 #716F64, inset -1px -1px 0 #ECE9D8"></div>
<div class="t" style="left:119px;top:471px">200</div>
<div class="a" style="left:163px;top:466px;width:21px;height:1px;background:#ACA899"></div>
<div class="a" style="left:183px;top:466px;width:1px;height:22px;background:#fff"></div>
<div class="a" style="left:163px;top:488px;width:21px;height:1px;background:#fff"></div>
<div class="rb" style="left:163px;top:467px;width:20px;height:9px"></div>
<div class="rb" style="left:163px;top:476px;width:20px;height:12px"></div>
<div class="a" style="left:174px;top:470px;width:1px;height:1px;background:#000"></div><div class="a" style="left:173px;top:471px;width:3px;height:1px;background:#000"></div><div class="a" style="left:172px;top:472px;width:5px;height:1px;background:#000"></div><div class="a" style="left:171px;top:473px;width:7px;height:1px;background:#000"></div>
<div class="a" style="left:174px;top:483px;width:1px;height:1px;background:#000"></div><div class="a" style="left:173px;top:482px;width:3px;height:1px;background:#000"></div><div class="a" style="left:172px;top:481px;width:5px;height:1px;background:#000"></div><div class="a" style="left:171px;top:480px;width:7px;height:1px;background:#000"></div>
<div class="a" style="left:131px;top:494px;width:53px;height:22px;background:#fff;border-top:1px solid #ACA899;border-left:1px solid #ACA899;border-right:1px solid #fff;border-bottom:1px solid #fff;box-shadow:inset 1px 1px 0 #716F64, inset -1px -1px 0 #ECE9D8"></div>
<div class="t" style="left:135px;top:498px">100</div>
<div class="rb" style="left:168px;top:497px;width:14px;height:6px;border-top:0;box-shadow:none;border-bottom-color:#ACA899;border-right-color:#ACA899"></div>
<div class="rb" style="left:168px;top:503px;width:14px;height:10px;border-right-color:#716F64"></div>
<div class="a" style="left:174px;top:499px;width:1px;height:1px;background:#000"></div><div class="a" style="left:173px;top:500px;width:3px;height:1px;background:#000"></div><div class="a" style="left:172px;top:501px;width:5px;height:1px;background:#000"></div><div class="a" style="left:171px;top:502px;width:7px;height:1px;background:#000"></div>
<div class="a" style="left:174px;top:509px;width:1px;height:1px;background:#000"></div><div class="a" style="left:173px;top:508px;width:3px;height:1px;background:#000"></div><div class="a" style="left:172px;top:507px;width:5px;height:1px;background:#000"></div><div class="a" style="left:171px;top:506px;width:7px;height:1px;background:#000"></div>
<div class="sk2" style="left:203px;top:437px;width:13px;height:13px"></div>
<div class="t" style="left:222px;top:437px">Log</div>
<div class="rb" style="left:250px;top:445px;width:23px;height:22px"><svg class="a" style="left:3px;top:2px" width="17" height="17"><circle cx="5.5" cy="5.5" r="4.9" fill="#F4F8FC" stroke="#000" stroke-width="1.4"/><circle cx="5.5" cy="5.5" r="3.3" fill="none" stroke="#C8D0D8" stroke-width="0.5" stroke-dasharray="1 1"/><g shape-rendering="crispEdges"><rect x="3" y="5" width="5" height="1" fill="#F00000"/><rect x="5" y="3" width="1" height="5" fill="#F00000"/></g><path d="M9.8 9.6 L15.6 15.4" stroke="#000" stroke-width="2.2"/><rect x="8.6" y="8.6" width="1.4" height="1.4" fill="#E8E800"/></svg></div>
<div class="rb" style="left:250px;top:495px;width:23px;height:22px"><svg class="a" style="left:3px;top:2px" width="17" height="17"><circle cx="5.5" cy="5.5" r="4.9" fill="#F4F8FC" stroke="#000" stroke-width="1.4"/><circle cx="5.5" cy="5.5" r="3.3" fill="none" stroke="#C8D0D8" stroke-width="0.5" stroke-dasharray="1 1"/><g shape-rendering="crispEdges"><rect x="3" y="5" width="5" height="1" fill="#F00000"/></g><path d="M9.8 9.6 L15.6 15.4" stroke="#000" stroke-width="2.2"/><rect x="8.6" y="8.6" width="1.4" height="1.4" fill="#E8E800"/></svg></div>
<div class="rb" style="left:200px;top:470px;width:23px;height:22px"></div>
<div class="rb" style="left:225px;top:470px;width:23px;height:22px"></div>
<div class="rb" style="left:250px;top:470px;width:23px;height:22px"></div>
<div class="rb" style="left:275px;top:470px;width:23px;height:22px"></div>
<div class="rb" style="left:300px;top:470px;width:23px;height:22px"></div>
<svg class="a" style="left:0;top:0" width="330" height="500"><path d="M204 481 L212 473 V489 Z M212 481 L220 473 V489 Z M229 481 L245 473 V489 Z M279 473 L295 481 L279 489 Z M304 473 L312 481 L304 489 Z M312 473 L320 481 L312 489 Z" fill="#000"/><g shape-rendering="crispEdges" fill="#000"><rect x="259" y="476" width="6" height="1"/><rect x="261" y="476" width="2" height="11"/><rect x="259" y="486" width="6" height="1"/></g></svg>
<div class="t" style="left:339px;top:436px">Intensity :</div>
<div class="t" style="left:339px;top:452px">Number :</div>
<div class="sk" style="left:387px;top:432px;width:77px;height:17px"></div>
<div class="t" style="left:387px;top:434px;width:77px;text-align:center">266</div>
<div class="sk" style="left:387px;top:451px;width:77px;height:17px"></div>
<div class="t" style="left:387px;top:453px;width:77px;text-align:center">40371</div>
<div class="rb" style="left:471px;top:432px;width:45px;height:24px"><div class="t" style="left:0;top:5px;width:43px;text-align:center">See =</div></div>
<div class="rb" style="left:471px;top:455px;width:45px;height:24px"><div class="t" style="left:0;top:5px;width:43px;text-align:center">See &lt;</div></div>
<div class="rb" style="left:471px;top:479px;width:45px;height:24px"><div class="t" style="left:0;top:5px;width:43px;text-align:center">See &gt;</div></div>
<div class="t" style="left:523px;top:436px">Entropy :5.796913</div>
<div class="t" style="left:523px;top:461px">765813/52.9883%</div>
<div class="t" style="left:523px;top:485px">719807/49.8051%</div>
<div class="rb" style="left:619px;top:455px;width:61px;height:24px"><div class="t" style="left:0;top:5px;width:59px;text-align:center">Cut &lt;</div></div>
<div class="rb" style="left:619px;top:479px;width:61px;height:24px"><div class="t" style="left:0;top:5px;width:59px;text-align:center">Cut &gt;</div></div>
<div class="rb" style="left:339px;top:478px;width:24px;height:23px"><svg class="a" style="left:3px;top:3px" width="16" height="16"><path d="M1 8 L15 1 V15 Z" fill="#000"/></svg></div>
<div class="rb" style="left:367px;top:478px;width:24px;height:23px"><svg class="a" style="left:4px;top:3px" width="16" height="16"><path d="M1 1 L15 8 L1 15 Z" fill="#000"/></svg></div>
<div class="sk2" style="left:395px;top:484px;width:13px;height:13px"></div>
<div class="t" style="left:413px;top:484px">Mediane</div>
<div class="sk2" style="left:340px;top:507px;width:13px;height:13px"></div>
<div class="t" style="left:357px;top:506px">Sky model :</div>
<div class="rb" style="left:691px;top:443px;width:75px;height:25px"><div class="t" style="left:0;top:5px;width:73px;text-align:center">Save</div></div>
<div class="rb" style="left:691px;top:471px;width:75px;height:25px"><div class="t" style="left:36px;top:5px"><u>C</u>lose</div></div>
<svg class="a" style="left:700px;top:470px" width="30" height="30" shape-rendering="crispEdges"><g transform="translate(-700,-470)"><rect x="711" y="475" width="6" height="3" fill="#000"/><rect x="712" y="476" width="4" height="1" fill="#00E000"/><rect x="709" y="479" width="10" height="13" fill="#000080"/><rect x="710" y="480" width="8" height="11" fill="#fff"/><rect x="710" y="480" width="3" height="11" fill="#E000E0"/><rect x="711" y="481" width="1" height="1" fill="#800080"/><rect x="711" y="483" width="1" height="1" fill="#800080"/><rect x="711" y="485" width="1" height="1" fill="#800080"/><rect x="711" y="487" width="1" height="1" fill="#800080"/><rect x="713" y="480" width="1" height="11" fill="#000"/><rect x="714" y="480" width="4" height="6" fill="#fff"/><rect x="714" y="481" width="1" height="1" fill="#00E8E8"/><rect x="716" y="481" width="1" height="1" fill="#00E8E8"/><rect x="714" y="483" width="1" height="1" fill="#00E8E8"/><rect x="716" y="483" width="1" height="1" fill="#00E8E8"/><rect x="714" y="485" width="1" height="1" fill="#00E8E8"/><rect x="716" y="485" width="1" height="1" fill="#00E8E8"/><rect x="705" y="491" width="5" height="1" fill="#000080"/><rect x="718" y="491" width="5" height="1" fill="#000080"/><rect x="710" y="491" width="8" height="1" fill="#A0A0A0"/></g></svg>
<div class="a" style="left:793px;top:187px;width:438px;height:398px;background:#ECE9D8;border-top:1px solid #ECE9D8;border-left:1px solid #ECE9D8;border-right:1px solid #716F64;border-bottom:1px solid #716F64;box-shadow:inset 1px 1px 0 #fff, inset -1px -1px 0 #ACA899"></div>
<div class="a" style="left:797px;top:191px;width:430px;height:25px;background:linear-gradient(to right,#7A96DF,#A6BEEE)"></div>
<svg class="a" style="left:802px;top:195px" width="16" height="16" viewBox="0 0 16 16" shape-rendering="crispEdges"><rect width="16" height="16" fill="#000080"/><rect x="2" y="2" width="1" height="1" fill="#808040"/><rect x="4" y="2" width="1" height="1" fill="#800040"/><rect x="6" y="2" width="1" height="1" fill="#6060A0"/><rect x="11" y="2" width="1" height="1" fill="#008080"/><rect x="15" y="2" width="1" height="2" fill="#6060C0"/><rect x="4" y="6" width="1" height="1" fill="#6060C0"/><rect x="6" y="8" width="1" height="1" fill="#800040"/><rect x="15" y="8" width="1" height="1" fill="#800040"/><path d="M7 5 L9 4 L12 5 L14 4 L15 6 L14 8 L13 11 L12 12 L10 11 L9 9 L8 8 Z" fill="#4848FF"/><rect x="7" y="5" width="2" height="1" fill="#E0E0FF"/><rect x="9" y="7" width="2" height="1" fill="#C8C8FF"/><rect x="12" y="6" width="2" height="1" fill="#C0C0FF"/><rect x="13" y="9" width="1" height="2" fill="#D0D0FF"/><rect x="1" y="9" width="6" height="5" fill="#C8C8B8"/><rect x="2" y="10" width="4" height="3" fill="#0000E0"/><rect x="1" y="14" width="6" height="2" fill="#909080"/><rect x="1" y="14" width="3" height="1" fill="#80E080"/><rect x="7" y="12" width="4" height="1" fill="#20D8E8"/><rect x="6" y="13" width="2" height="1" fill="#20B8C8"/><rect x="11" y="12" width="4" height="4" fill="#D8D8C8"/><rect x="12" y="12" width="1" height="4" fill="#A0A098"/></svg>
<div class="t" style="left:823px;top:197px;font-weight:bold;font-size:13px;color:#D8E4F8">Report</div>
<div class="rb" style="left:1175px;top:193px;width:16px;height:21px">
<div class="a" style="left:3px;top:11px;width:6px;height:2px;background:#000"></div>
</div>
<div class="rb" style="left:1191px;top:193px;width:16px;height:21px">
<div class="a" style="left:1px;top:4px;width:10px;height:9px;border:1px solid #000;border-top-width:2px"></div>
</div>
<div class="rb" style="left:1209px;top:193px;width:16px;height:21px">
<svg class="a" style="left:3px;top:5px" width="9" height="9"><path d="M1 1 L8 8 M8 1 L1 8" stroke="#000" stroke-width="1.8"/></svg>
</div>
<div class="a" style="left:797px;top:217px;width:423px;height:326px;background:#fff;border-top:1px solid #ACA899;border-left:1px solid #ACA899;border-right:1px solid #fff;border-bottom:1px solid #fff;box-shadow:inset 1px 1px 0 #716F64, inset -1px -1px 0 #ECE9D8"></div>
<div class="mono" style="left:802px;top:220px">Windowed statistics of image epsaur_nad_dark_090.fit
Between 413,581 and 565,721

Minimum    : 207.000
Maximum    : 322.000
Median     : 268.000
Mean       : 267.896
Std. dev.  : 13.570

Windowed statistics of image epsaur_nad_dark_090.fit
Between 360,574 and 480,702

Minimum    : 207.000
Maximum    : 352.000
Median     : 268.000
Mean       : 268.609
Std. dev.  : 13.617</div>
<div class="rb" style="left:805px;top:552px;width:25px;height:25px"></div>
<div class="rb" style="left:833px;top:552px;width:25px;height:25px"></div>
<div class="rb" style="left:861px;top:552px;width:25px;height:25px"></div>
<svg class="a" style="left:0;top:0" width="900" height="590" shape-rendering="crispEdges"><g transform="translate(784,500)"><rect x="27" y="57" width="13" height="15" fill="#000"/><rect x="26" y="58" width="15" height="13" fill="#000"/><rect x="29" y="57" width="9" height="1" fill="#FF0000"/><rect x="29" y="58" width="9" height="7" fill="#fff"/><rect x="31" y="67" width="7" height="5" fill="#B8B8B8"/><rect x="33" y="68" width="2" height="2" fill="#000"/><rect x="39" y="59" width="1" height="1" fill="#808080"/></g><path d="M841.5 557.5 H847.5 L850.5 560.5 V565" fill="#fff" stroke="#000"/><rect x="842" y="558" width="6" height="7" fill="#fff"/><rect x="841" y="557" width="1" height="8" fill="#000"/><rect x="843" y="559" width="2" height="1" fill="#000"/><rect x="843" y="561" width="5" height="1" fill="#000"/><rect x="843" y="563" width="6" height="1" fill="#000"/><rect x="838" y="565" width="16" height="8" rx="1" fill="#000"/><rect x="839" y="566" width="14" height="3" fill="#E8E8E8"/><rect x="840" y="567" width="1" height="1" fill="#909090"/><rect x="842" y="567" width="1" height="1" fill="#909090"/><rect x="844" y="567" width="1" height="1" fill="#909090"/><rect x="846" y="567" width="1" height="1" fill="#909090"/><rect x="848" y="567" width="1" height="1" fill="#909090"/><rect x="851" y="567" width="1" height="1" fill="#FF0000"/><rect x="839" y="570" width="14" height="2" fill="#C8C8C8"/><rect x="866" y="557" width="7" height="12" fill="#000"/><rect x="867" y="558" width="6" height="10" fill="#fff"/><path d="M872.5 557.5 L875.5 560.5 V569" stroke="#000" fill="none"/><rect x="873" y="559" width="2" height="9" fill="#fff"/><rect x="868" y="559" width="2" height="1" fill="#000"/><rect x="868" y="562" width="5" height="1" fill="#000"/><rect x="868" y="564" width="5" height="1" fill="#000"/><rect x="868" y="566" width="5" height="1" fill="#000"/><rect x="871" y="566" width="11" height="7" fill="#000"/><rect x="872" y="566" width="10" height="6" fill="#FFFF00"/><rect x="873" y="567" width="8" height="5" fill="#fff"/><path d="M874 557 H879 V561 H882 L877 566.5 L872 561 H874 Z" fill="#FF0000" shape-rendering="auto"/></svg>
<div class="rb" style="left:974px;top:552px;width:75px;height:25px"><div class="t" style="left:0;top:6px;width:73px;text-align:center"><u>Q</u>uit</div></div>
</body></html>
